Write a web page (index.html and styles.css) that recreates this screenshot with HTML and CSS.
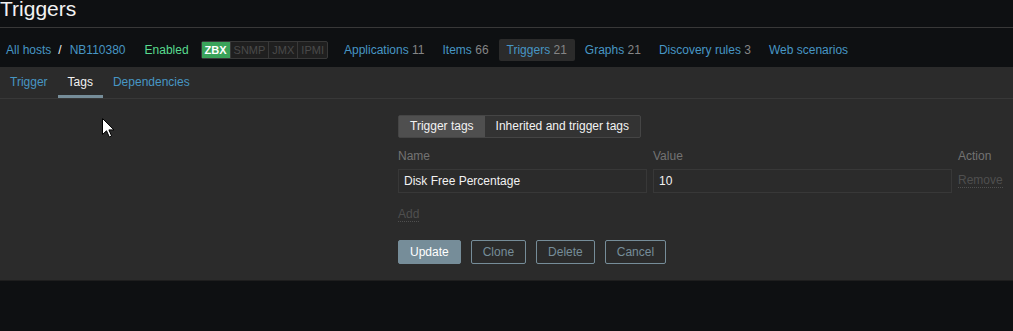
FILE: index.html
```html
<!DOCTYPE html>
<html lang="en">
<head>
<meta charset="UTF-8">
<meta name="viewport" content="width=device-width, initial-scale=1.0">
<title>Triggers</title>
<link rel="stylesheet" href="styles.css">
</head>
<body>
    <!-- Page title -->
    <header class="header-title">
        <h1>Triggers</h1>
    </header>

    <!-- Host breadcrumbs and navigation -->
    <nav class="host-nav">
        <ul class="crumbs">
            <li><a href="#">All hosts</a></li>
            <li class="sep">/</li>
            <li><a href="#">NB110380</a></li>
        </ul>
        <span class="status-enabled">Enabled</span>
        <div class="avail">
            <span class="avail-box on">ZBX</span>
            <span class="avail-box">SNMP</span>
            <span class="avail-box">JMX</span>
            <span class="avail-box">IPMI</span>
        </div>
        <ul class="host-links">
            <li><a href="#">Applications</a> <sup>11</sup></li>
            <li><a href="#">Items</a> <sup>66</sup></li>
            <li class="selected"><a href="#">Triggers</a> <sup>21</sup></li>
            <li><a href="#">Graphs</a> <sup>21</sup></li>
            <li><a href="#">Discovery rules</a> <sup>3</sup></li>
            <li><a href="#">Web scenarios</a></li>
        </ul>
    </nav>

    <div class="container">
        <!-- Form tabs -->
        <ul class="tabs">
            <li><a href="#">Trigger</a></li>
            <li class="active"><a href="#">Tags</a></li>
            <li><a href="#">Dependencies</a></li>
        </ul>

        <div class="form">
            <div class="radio-list">
                <span class="radio-item checked">Trigger tags</span>
                <span class="radio-item">Inherited and trigger tags</span>
            </div>

            <div class="tags-table">
                <div class="th name-col">Name</div>
                <div class="th value-col">Value</div>
                <div class="th">Action</div>

                <div class="input name-col">Disk Free Percentage</div>
                <div class="input value-col">10</div>
                <div class="action-cell"><span class="link-action">Remove</span></div>
            </div>

            <div class="add-row"><span class="link-action">Add</span></div>

            <div class="buttons">
                <button class="btn primary">Update</button>
                <button class="btn alt">Clone</button>
                <button class="btn alt">Delete</button>
                <button class="btn alt">Cancel</button>
            </div>
        </div>
    </div>

    <!-- Mouse pointer -->
    <svg class="cursor" width="13" height="20" viewBox="0 0 13 20">
        <path d="M0.5 0.5 L0.5 16.5 L4.5 12.8 L7.3 19 L9.6 18 L6.9 11.9 L12 11.9 Z" fill="#fff" stroke="#000" stroke-width="1"/>
    </svg>
</body>
</html>
```

FILE: styles.css
```css
body {
    font-family: "Liberation Sans", Arial, sans-serif;
    font-size: 12px;
    background: #0e1012;
    color: #f2f2f2;
    margin: 0;
    padding: 0;
    overflow: hidden;
}

a {
    color: #4796c4;
    text-decoration: none;
}

ul {
    list-style: none;
    margin: 0;
    padding: 0;
}

.header-title {
    height: 27px;
    border-bottom: 1px solid #383838;
}

.header-title h1 {
    margin: 0;
    font-size: 21px;
    font-weight: normal;
    line-height: 17px;
}

/* breadcrumbs row */
.host-nav {
    display: flex;
    align-items: center;
    height: 35px;
    padding: 4px 0 0 6px;
}

.crumbs {
    display: flex;
}

.crumbs .sep {
    margin: 0 8px 0 7px;
    color: #f2f2f2;
}

.status-enabled {
    color: #59db8f;
    margin-left: 19px;
}

.avail {
    display: flex;
    margin-left: 12px;
    height: 16px;
    border: 1px solid #383838;
    border-radius: 2px;
    background: #1f1f1f;
}

.avail-box {
    font-size: 11px;
    line-height: 16px;
    padding: 0 3px;
    color: #4a4a4a;
    border-left: 1px solid #383838;
}

.avail-box:first-child {
    border-left: none;
}

.avail-box.on {
    background: #3aa35a;
    color: #fff;
    font-weight: bold;
}

.host-links {
    display: flex;
    margin-left: 8px;
}

.host-links li {
    margin-right: 2px;
    padding: 0 8px;
    height: 22px;
    line-height: 22px;
    border-radius: 2px;
}

.host-links li.selected {
    background: #2b2b2b;
}

.host-links sup {
    font-size: 12px;
    vertical-align: baseline;
    color: #858585;
}

/* main container */
.container {
    background: #2b2b2b;
    border-bottom: 1px solid #1e1e1e;
}

.tabs {
    display: flex;
    height: 31px;
    border-bottom: 1px solid #383838;
}

.tabs li {
    padding: 0 10px;
    line-height: 31px;
    border-bottom: 3px solid transparent;
    height: 28px;
}

.tabs li.active {
    border-bottom-color: #768d99;
}

.tabs li.active a {
    color: #f2f2f2;
}

.form {
    padding: 16px 0 16px 398px;
}

.radio-list {
    display: inline-flex;
    border: 1px solid #454545;
    border-radius: 2px;
    background: #333;
}

.radio-item {
    padding: 0 11px;
    line-height: 21px;
    color: #f2f2f2;
}

.radio-item.checked {
    background: #4f4f4f;
}

.tags-table {
    display: grid;
    grid-template-columns: 249px 299px 55px;
    column-gap: 6px;
    margin-top: 10px;
}

.th {
    color: #737373;
    line-height: 17px;
    height: 21px;
}

.input {
    height: 22px;
    line-height: 22px;
    border: 1px solid #383838;
    padding: 0 5px;
    color: #f2f2f2;
}

.action-cell {
    line-height: 22px;
}

.link-action {
    color: #4f4f4f;
    border-bottom: 1px dotted #4f4f4f;
    line-height: 13px;
    display: inline-block;
}

.add-row {
    margin-top: 14px;
    height: 20px;
}

.buttons {
    display: flex;
    gap: 10px;
    margin-top: 13px;
}

.btn {
    font-family: "Liberation Sans", Arial, sans-serif;
    font-size: 12px;
    height: 24px;
    padding: 0 11px;
    border: 1px solid #768d99;
    border-radius: 2px;
    cursor: pointer;
}

.btn.primary {
    background: #768d99;
    color: #fff;
}

.btn.alt {
    background: transparent;
    color: #768d99;
}

.cursor {
    position: absolute;
    left: 102px;
    top: 118px;
}
```
